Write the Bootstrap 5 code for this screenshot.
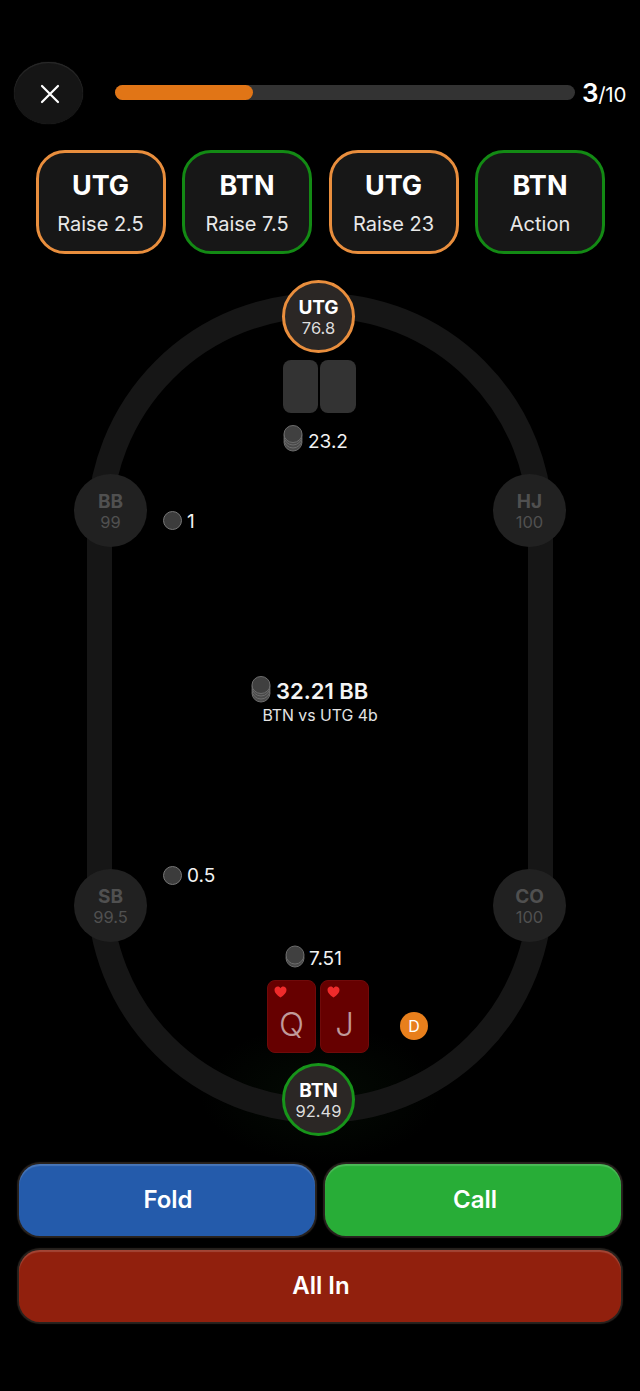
<!DOCTYPE html>
<html lang="en">
<head>
<meta charset="utf-8">
<title>Poker trainer</title>
<link href="https://cdn.jsdelivr.net/npm/bootstrap@5.3.0/dist/css/bootstrap.min.css" rel="stylesheet">
<style>
html,body{background:#000;margin:0;height:1391px;overflow:hidden}
body{font-family:Inter,"Liberation Sans",sans-serif;color:#fff;padding-top:62px}
.topbar{height:62px;padding-left:14px;padding-right:14px}
.close-btn{width:69px;height:62px;flex:none;border-radius:50%;background:#151515;border:0;box-shadow:inset 0 1px 1px #2c2c2c,0 0 1px #333;padding:1px 0 0 2px}
.track{margin-left:32px;width:460px;flex:none;height:15px;margin-top:-1px;border-radius:8px;background:#333}
.fill{height:100%;border-radius:8px;background:#e17516}
.count{margin-left:7px;flex:none;font-size:26px;font-weight:600;line-height:1;margin-top:-1px;letter-spacing:-.3px}
.count span{font-size:20.5px;font-weight:400}
.actions{margin-top:26px;padding-left:35.5px;gap:16.5px}
.act{width:130px;height:104px;flex:none;border-radius:29px;background:#171717;border:3px solid;text-align:center;padding-top:18px}
.act-u{border-color:#e98e3d}
.act-b{border-color:#138a14}
.act b{display:block;font-size:27px;line-height:30px;font-weight:700}
.act span{display:block;font-size:20px;line-height:24px;margin-top:11px;color:#e8e8e8}
.stage{height:896px;position:relative}
.glow{position:absolute;left:200px;top:770px;width:240px;height:140px;background:radial-gradient(closest-side,rgba(30,90,30,.12),rgba(30,90,30,0))}
.felt{position:absolute;left:87px;top:39px;width:466px;height:830px;border:25px solid #161616;border-radius:233px}
.seat{position:absolute;width:73px;height:73px;border-radius:50%;background:#212121;color:#505050;text-align:center;padding-top:17px}
.seat b{display:block;font-size:19px;line-height:21px;font-weight:700}
.seat span{display:block;font-size:16.5px;line-height:20px}
.seat.on{background:#2b2725;color:#fff;border:3px solid;padding-top:14px}
.seat.on span{color:#ddd}
.on-u{border-color:#e98e3d!important}
.on-b{border-color:#17951a!important}
.back{position:absolute;top:106px;width:36px;height:53px;border-radius:8px;background:#333}
.hero{position:absolute;top:726px;width:49px;height:73px;border-radius:8px;background:#660000;border:1px solid #700a0a;text-align:center;color:#c09a9a;font-size:33px;font-weight:300;line-height:40px;padding-top:23px}
.hero svg{position:absolute;left:6px;top:5px}
.amt{position:absolute;font-size:19px;line-height:22px;color:#f2f2f2}
.chip{position:absolute;width:19px;height:19px;border-radius:50%;background:#3c3c3c;border:1px solid #777}
.stack{position:absolute}
.pot{position:absolute;left:276px;top:425px;font-size:22px;line-height:25px;font-weight:600;color:#f4f4f4}
.sub{position:absolute;left:200px;width:240px;top:453px;text-align:center;font-size:15.8px;line-height:18px;color:#e4e4e4}
.dealer{position:absolute;left:400px;top:758px;width:28px;height:28px;border-radius:50%;background:#e87f1c;color:#fff;font-size:16px;line-height:28px;text-align:center}
.moves{padding:0 19px;gap:14px 10px;margin-top:14px}
.mv{height:72px;border:0;border-radius:21px;color:#fff;font-size:24px;font-weight:600;padding:0 0 0 2px;box-shadow:0 0 1px 2px #29231f,inset 0 2px 1px rgba(255,255,255,.17)}
.mv:hover,.mv:active{color:#fff}
.half{width:296px}
.full{width:602px}
.m-b,.m-b:hover{background:#245bab}
.m-g,.m-g:hover{background:#28ad37;padding-left:4px}
.m-r,.m-r:hover{background:#91200d}
</style>
</head>
<body>
<div class="topbar d-flex align-items-center">
  <button class="close-btn d-flex align-items-center justify-content-center" aria-label="Close">
    <svg width="20" height="20" viewBox="0 0 20 20"><path d="M2 2 18 18M18 2 2 18" stroke="#fff" stroke-width="2.2" stroke-linecap="round" fill="none"/></svg>
  </button>
  <div class="track"><div class="fill" style="width:30%"></div></div>
  <div class="count">3<span>/10</span></div>
</div>
<div class="actions d-flex">
  <div class="act act-u"><b>UTG</b><span>Raise 2.5</span></div>
  <div class="act act-b"><b>BTN</b><span>Raise 7.5</span></div>
  <div class="act act-u"><b>UTG</b><span>Raise 23</span></div>
  <div class="act act-b"><b>BTN</b><span>Action</span></div>
</div>
<div class="stage">
  <div class="glow"></div>
  <div class="felt"></div>

  <div class="seat on on-u" style="left:282px;top:26px"><b>UTG</b><span>76.8</span></div>
  <div class="back" style="left:283px;width:35px"></div>
  <div class="back" style="left:320px"></div>
  <svg class="stack" style="left:283px;top:171px" width="20" height="27" viewBox="0 0 20 27"><g fill="#4a4a4a" stroke="#6c6c6c"><ellipse cx="10" cy="17" rx="9" ry="9"/><ellipse cx="10" cy="14" rx="9" ry="9"/><ellipse cx="10" cy="11" rx="9" ry="9"/></g><ellipse cx="10" cy="9" rx="9" ry="8.5" fill="#404040" stroke="#6c6c6c"/></svg>
  <div class="amt" style="left:308px;top:177px">23.2</div>

  <div class="seat" style="left:74px;top:220px"><b>BB</b><span>99</span></div>
  <div class="chip" style="left:163px;top:257px"></div>
  <div class="amt" style="left:187px;top:257px">1</div>
  <div class="seat" style="left:493px;top:220px"><b>HJ</b><span>100</span></div>

  <svg class="stack" style="left:251px;top:422px" width="20" height="27" viewBox="0 0 20 27"><g fill="#4a4a4a" stroke="#6c6c6c"><ellipse cx="10" cy="17" rx="9" ry="9"/><ellipse cx="10" cy="14" rx="9" ry="9"/><ellipse cx="10" cy="11" rx="9" ry="9"/></g><ellipse cx="10" cy="9" rx="9" ry="8.5" fill="#404040" stroke="#6c6c6c"/></svg>
  <div class="pot">32.21 BB</div>
  <div class="sub">BTN vs UTG 4b</div>

  <div class="chip" style="left:163px;top:612px"></div>
  <div class="amt" style="left:187px;top:611px">0.5</div>
  <div class="seat" style="left:74px;top:615px"><b>SB</b><span>99.5</span></div>
  <div class="seat" style="left:493px;top:615px"><b>CO</b><span>100</span></div>

  <svg class="stack" style="left:285px;top:691px" width="20" height="23" viewBox="0 0 20 23"><g fill="#4a4a4a" stroke="#6c6c6c"><ellipse cx="10" cy="13" rx="9" ry="9"/></g><ellipse cx="10" cy="10" rx="9" ry="9" fill="#404040" stroke="#6c6c6c"/></svg>
  <div class="amt" style="left:309px;top:694px">7.51</div>

  <div class="hero" style="left:267px"><svg width="13" height="12" viewBox="0 0 14 13"><path d="M7 12.5C3 9.5.5 7 .5 4.2.5 2 2.2.6 4 .6 5.300.6 6.400 1.300 7 2.400 7.600 1.300 8.700.6 10 .6c1.800 0 3.500 1.400 3.500 3.600C13.500 7 11 9.500 7 12.500Z" fill="#ee2b2b"/></svg>Q</div>
  <div class="hero" style="left:320px"><svg width="13" height="12" viewBox="0 0 14 13"><path d="M7 12.5C3 9.5.5 7 .5 4.2.5 2 2.2.6 4 .6 5.300.6 6.400 1.300 7 2.400 7.600 1.300 8.700.6 10 .6c1.800 0 3.500 1.400 3.500 3.600C13.500 7 11 9.500 7 12.500Z" fill="#ee2b2b"/></svg>J</div>
  <div class="dealer">D</div>

  <div class="seat on on-b" style="left:282px;top:809px"><b>BTN</b><span>92.49</span></div>
</div>
<div class="moves d-flex flex-wrap">
  <button class="btn mv half m-b">Fold</button>
  <button class="btn mv half m-g">Call</button>
  <button class="btn mv full m-r">All In</button>
</div>
</body>
</html>
